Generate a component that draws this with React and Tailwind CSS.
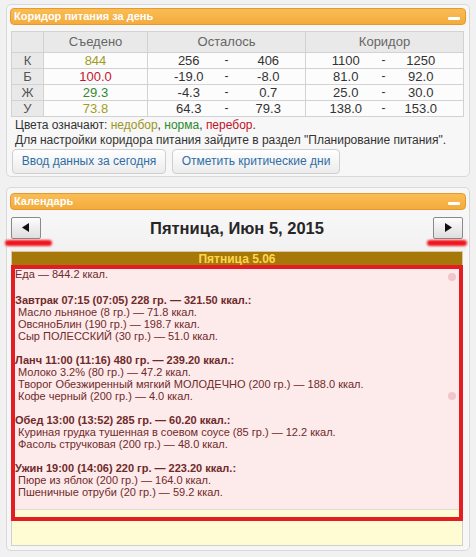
import React from "react";

const F = { fontFamily: '"Liberation Sans", Arial, sans-serif' };

function Minus() {
  return <div className="w-[12px] h-[3px] bg-white rounded-[1px]" />;
}

function OrangeHeader({ title }) {
  return (
    <div className="h-[17px] rounded-[4px] border border-[#e49a2c] bg-gradient-to-b from-[#f9bd55] to-[#f4ab3c] flex items-center justify-between pl-[3px] pr-[5px]">
      <span className="text-white font-bold text-[11px] leading-none">{title}</span>
      <div className="pt-[4px]"><Minus /></div>
    </div>
  );
}

const rows = [
  { k: "К", v: "844", c: "text-[#a29c1e]", a: "256", b: "406", x: "1100", y: "1250" },
  { k: "Б", v: "100.0", c: "text-[#c8142c]", a: "-19.0", b: "-8.0", x: "81.0", y: "92.0" },
  { k: "Ж", v: "29.3", c: "text-[#2f8a2f]", a: "-4.3", b: "0.7", x: "25.0", y: "30.0" },
  { k: "У", v: "73.8", c: "text-[#a29c1e]", a: "64.3", b: "79.3", x: "138.0", y: "153.0" },
];

function Table() {
  const td = "h-[16px] p-0 text-center leading-none";
  return (
    <table className="w-[453px] table-fixed border-collapse text-[12px] text-[#333]">
      <colgroup>
        <col className="w-[32px]" />
        <col className="w-[104px]" />
        <col className="w-[60px]" />
        <col className="w-[38px]" />
        <col className="w-[60px]" />
        <col className="w-[59px]" />
        <col className="w-[38px]" />
        <col />
      </colgroup>
      <thead>
        <tr className="bg-[#e9e9e9] text-[#666]">
          <th className="h-[16px] p-0 font-normal border border-[#d2d2d2]"></th>
          <th className="p-0 font-normal border border-[#d2d2d2] text-[13px]">Съедено</th>
          <th colSpan={3} className="p-0 font-normal border border-[#d2d2d2] text-[13px]">Осталось</th>
          <th colSpan={3} className="p-0 font-normal border border-[#d2d2d2] text-[13px]">Коридор</th>
        </tr>
      </thead>
      <tbody>
        {rows.map((r) => (
          <tr key={r.k} className="bg-[#fcfcfc]">
            <td className={`${td} bg-[#e9e9e9] text-[#555] text-[13px] border border-[#d2d2d2]`}>{r.k}</td>
            <td className={`${td} ${r.c} border border-[#d2d2d2] text-[13px]`}>{r.v}</td>
            <td className={`${td} pl-[22px] border-y border-l border-[#d2d2d2] text-[13px]`}>{r.a}</td>
            <td className={`${td} border-y border-[#d2d2d2]`}>-</td>
            <td className={`${td} pr-[14px] border-y border-r border-[#d2d2d2] text-[13px]`}>{r.b}</td>
            <td className={`${td} pl-[21px] border-y border-l border-[#d2d2d2] text-[13px]`}>{r.x}</td>
            <td className={`${td} border-y border-[#d2d2d2]`}>-</td>
            <td className={`${td} pr-[24px] border-y border-r border-[#d2d2d2] text-[13px]`}>{r.y}</td>
          </tr>
        ))}
      </tbody>
    </table>
  );
}

function Btn({ children, w }) {
  return (
    <div className={`${w} h-[25px] rounded-[4px] border border-[#cfcfcf] bg-gradient-to-b from-[#ffffff] to-[#ececec] flex items-center justify-center text-[12px] text-[#2f6ea6]`}>
      {children}
    </div>
  );
}

function NavBtn({ dir }) {
  return (
    <div className="w-[30px] h-[22px] border border-[#8a8a8a] rounded-[2px] bg-gradient-to-b from-[#fdfdfd] to-[#dedede] flex items-center justify-center">
      <svg width="8" height="9" viewBox="0 0 8 9">
        {dir === "l" ? <polygon points="7,0 7,9 0,4.5" fill="#111" /> : <polygon points="1,0 1,9 8,4.5" fill="#111" />}
      </svg>
    </div>
  );
}

const meals = [
  {
    h: "Завтрак 07:15 (07:05) 228 гр. — 321.50 ккал.:",
    items: ["Масло льняное (8 гр.) — 71.8 ккал.", "ОвсяноБлин (190 гр.) — 198.7 ккал.", "Сыр ПОЛЕССКИЙ (30 гр.) — 51.0 ккал."],
  },
  {
    h: "Ланч 11:00 (11:16) 480 гр. — 239.20 ккал.:",
    items: ["Молоко 3.2% (80 гр.) — 47.2 ккал.", "Творог Обезжиренный мягкий МОЛОДЕЧНО (200 гр.) — 188.0 ккал.", "Кофе черный (200 гр.) — 4.0 ккал."],
  },
  {
    h: "Обед 13:00 (13:52) 285 гр. — 60.20 ккал.:",
    items: ["Куриная грудка тушенная в соевом соусе (85 гр.) — 12.2 ккал.", "Фасоль стручковая (200 гр.) — 48.0 ккал."],
  },
  {
    h: "Ужин 19:00 (14:06) 220 гр. — 223.20 ккал.:",
    items: ["Пюре из яблок (200 гр.) — 164.0 ккал.", "Пшеничные отруби (20 гр.) — 59.2 ккал."],
  },
];

export default function App() {
  return (
    <div className="relative w-[476px] h-[557px] overflow-hidden bg-[#f1f1f1]" style={F}>
      <div className="h-[4px]" />
      {/* Panel 1 */}
      <div className="mx-[6px] w-[464px] border border-[#d9d9d9] rounded-[5px] bg-[#f7f7f7] px-[3px] pt-[3px] pb-[2px]">
        <OrangeHeader title="Коридор питания за день" />
        <div className="mt-[6px] pl-[1px]">
          <Table />
        </div>
        <div className="pl-[5px] text-[12px] text-[#333] leading-[15px] mt-[1px]">
          <div>
            Цвета означают: <span className="text-[#9a9622]">недобор</span>,{" "}
            <span className="text-[#2c8a2c]">норма</span>, <span className="text-[#c0122a]">перебор</span>.
          </div>
          <div>Для настройки коридора питания зайдите в раздел "Планирование питания".</div>
        </div>
        <div className="flex gap-[6px] pl-[2px] mt-[1px]">
          <Btn w="w-[154px]">Ввод данных за сегодня</Btn>
          <Btn w="w-[168px]">Отметить критические дни</Btn>
        </div>
      </div>

      {/* Panel 2 */}
      <div className="mx-[6px] mt-[10px] w-[464px] h-[364px] border border-[#d9d9d9] rounded-[5px] bg-[#f7f7f7] px-[3px] pt-[5px]">
        <OrangeHeader title="Календарь" />
        <div className="mt-[7px] px-[1px] flex items-start justify-between bg-gradient-to-b from-[#f7f7f7] to-[#f1f1f1] h-[34px]">
          <NavBtn dir="l" />
          <div className="text-[16.5px] font-bold text-[#262626] leading-[22px]">Пятница, Июн 5, 2015</div>
          <div className="pr-[2px]"><NavBtn dir="r" /></div>
        </div>
        <div className="ml-[1px] w-[452px] h-[15px] border-t border-x border-[#d8c9a0] bg-[#a57809] flex items-center justify-center text-[12px] font-bold text-[#ffd54c] leading-none">
          Пятница 5.06
        </div>
        <div className="ml-[1px] w-[452px] h-[280px] border border-[#cfcfcf] bg-[#fffbd2] overflow-hidden">
          <div className="relative h-[243px] bg-[#fdeaea] border-b border-[#dcdcdc] overflow-hidden text-[11px] leading-[12px] text-[#6f2a2a] pl-[3px] pt-[1px]">
            <div>Еда — 844.2 ккал.</div>
            {meals.map((m, i) => (
              <div key={i} className={i === 0 ? "mt-[14px]" : "mt-[12px]"}>
                <div className="font-bold">{m.h}</div>
                {m.items.map((it) => (
                  <div key={it} className="pl-[3px]">{it}</div>
                ))}
              </div>
            ))}
            <div className="absolute right-[6px] top-[6px] w-[8px] h-[8px] rounded-full bg-[#f1c6cb]" />
            <div className="absolute right-[6px] top-[125px] w-[8px] h-[8px] rounded-full bg-[#f1c6cb]" />
          </div>
        </div>
      </div>

      {/* annotations */}
      <div className="absolute left-[11px] top-[265px] w-[452px] h-[256px] border-[4px] border-[#e41c24] pointer-events-none" />
      <div className="absolute left-[5px] top-[240px] w-[47px] h-[6px] rounded-full bg-[#f0141c] blur-[1px]" />
      <div className="absolute left-[427px] top-[240px] w-[40px] h-[6px] rounded-full bg-[#f0141c] blur-[1px]" />
    </div>
  );
}
